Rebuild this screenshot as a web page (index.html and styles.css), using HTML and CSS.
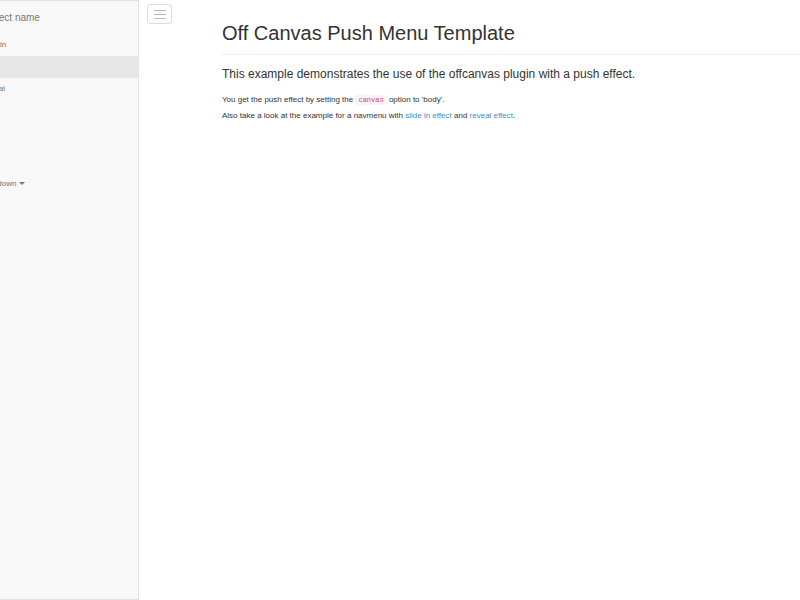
FILE: index.html
```html
<!DOCTYPE html>
<html lang="en">
<head>
<meta charset="utf-8">
<title>Off Canvas Push Menu Template</title>
<link rel="stylesheet" href="styles.css">
</head>
<body>
<div class="page">
  <nav class="navmenu">
    <a class="brand" href="#">Project name</a>
    <ul class="menu">
      <li><a href="#">Slide in</a></li>
      <li class="active"><a href="#">Push</a></li>
      <li><a href="#">Reveal</a></li>
    </ul>
    <ul class="menu">
      <li><a href="#">Link</a></li>
      <li><a href="#">Link</a></li>
      <li><a href="#">Link</a></li>
      <li><a href="#">Dropdown <span class="caret"></span></a></li>
    </ul>
  </nav>
  <div class="toolbar">
    <button class="toggle" type="button" aria-label="Toggle menu">
      <span class="bar"></span><span class="bar"></span><span class="bar"></span>
    </button>
  </div>
  <main class="content">
    <header class="page-header"><h1>Off Canvas Push Menu Template</h1></header>
    <p class="lead">This example demonstrates the use of the offcanvas plugin with a push effect.</p>
    <p>You get the push effect by setting the <code>canvas</code> option to 'body'.</p>
    <p>Also take a look at the example for a navmenu with <a href="#">slide in effect</a> and <a href="#">reveal effect</a>.</p>
  </main>
</div>
</body>
</html>
```
FILE: styles.css
```css
* { box-sizing: border-box; }

body {
  margin: 0;
  background: #fff;
  color: #333;
  font: 8px/12px "Liberation Sans", Arial, sans-serif;
  overflow-x: hidden;
}

a { color: #428bca; text-decoration: none; }

.page { display: flex; min-height: 100vh; }

.navmenu {
  flex: none;
  width: 167px;
  margin-left: -28px;
  border: 1px solid #e2e2e2;
  background: #f8f8f8;
}

.navmenu a { display: block; padding: 5px 7px; color: #777; }
.navmenu .brand { padding: 10px 8px; font-size: 10px; line-height: 13px; }

.menu { list-style: none; margin: 0 0 7px; padding: 0; }
.menu .active { background: #e7e7e7; }
.menu .active a { color: #555; }

.caret {
  display: inline-block;
  vertical-align: middle;
  border-top: 3px solid #777;
  border-left: 3px solid transparent;
  border-right: 3px solid transparent;
}

.toolbar { flex: none; width: 83px; padding: 4px 8px; }

.toggle {
  display: flex;
  flex-direction: column;
  justify-content: center;
  align-items: center;
  gap: 3px;
  width: 25px;
  height: 20px;
  padding: 0;
  border: 1px solid #ddd;
  border-radius: 3px;
  background: #fff;
}

.bar { width: 12px; height: 1px; background: #bbb; }

.content { flex: 1; min-width: 0; padding-top: 22px; }

.page-header { margin-bottom: 11px; padding-bottom: 10px; border-bottom: 1px solid #eee; }

h1 { margin: 0; font-size: 20px; line-height: 22px; font-weight: 500; }

p { margin: 0 0 4px; }
.lead { margin-bottom: 12px; font-size: 12px; line-height: 16px; }

code {
  padding: 1px 3px;
  border-radius: 2px;
  background: #f9f2f4;
  color: #d14b6c;
  font: 7px/8px "Liberation Mono", monospace;
}
```
